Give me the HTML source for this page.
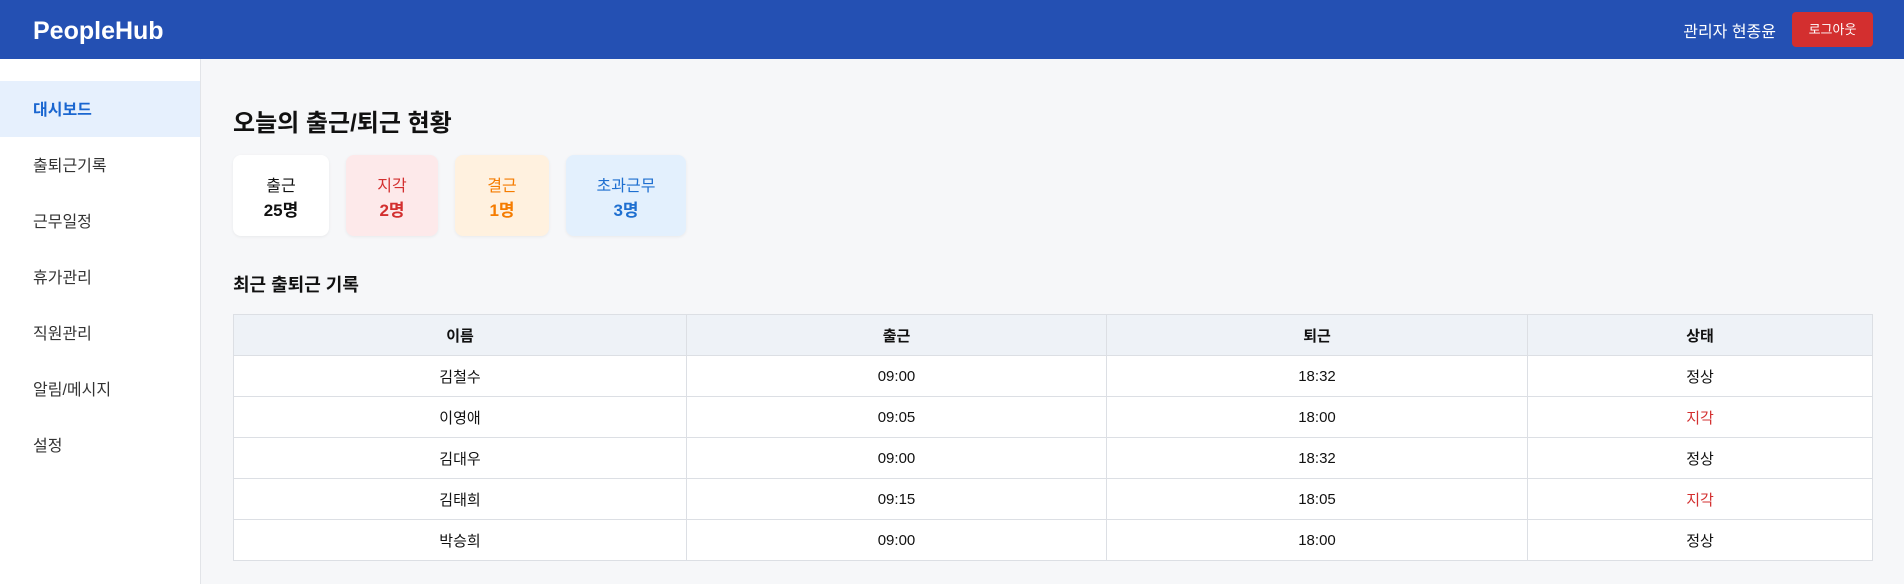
<!DOCTYPE html>
<html><head><meta charset="utf-8"><style>
*{box-sizing:border-box;margin:0;padding:0}
body{width:1904px;height:584px;overflow:hidden;background:#f6f7f9;font-family:"Liberation Sans","Noto Sans CJK KR",sans-serif;color:#111}
.hd{position:absolute;left:0;top:0;width:1904px;height:59px;background:#2450b3;color:#fff}
.logo{position:absolute;left:33px;top:16px;font-size:25px;font-weight:bold;line-height:30px}
.user{position:absolute;right:128px;top:18px;font-size:16px}
.out{position:absolute;left:1792px;top:12px;width:81px;height:35px;background:#d32f2f;border-radius:4px;color:#fff;font-size:13px;text-align:center;line-height:35px}
.sb{position:absolute;left:0;top:59px;width:201px;height:525px;background:#fff;border-right:1px solid #e2e4e8}
.sb div{position:absolute;left:0;width:200px;height:56px;line-height:60px;padding-left:33px;font-size:16px;color:#333}
.sb .act{background:#e6f0fd;color:#1a66d0;font-weight:bold}
h1{position:absolute;left:233px;top:103px;font-size:24px;font-weight:bold}
.card{position:absolute;top:155px;height:81px;border-radius:8px;text-align:center;font-size:16px;padding-top:20px;line-height:24px;box-shadow:0 1px 3px rgba(0,0,0,.06)}
.card b{display:block;font-size:17px}
h2{position:absolute;left:233px;top:271px;font-size:18px;font-weight:bold}
table{position:absolute;left:233px;top:314px;width:1640px;border-collapse:collapse;background:#fff;font-size:15px}
td,th{border:1px solid #dcdfe4;height:41px;text-align:center}
th{background:#eef2f7;font-weight:bold}
.r{color:#d32f2f}
</style></head><body>
<div class="hd"><div class="logo">PeopleHub</div><div class="user">관리자 현종윤</div><div class="out">로그아웃</div></div>
<div class="sb">
<div class="act" style="top:22px">대시보드</div>
<div style="top:78px">출퇴근기록</div>
<div style="top:134px">근무일정</div>
<div style="top:190px">휴가관리</div>
<div style="top:246px">직원관리</div>
<div style="top:302px">알림/메시지</div>
<div style="top:358px">설정</div>
</div>
<h1>오늘의 출근/퇴근 현황</h1>
<div class="card" style="left:233px;width:96px;background:#fff">출근<b>25명</b></div>
<div class="card" style="left:346px;width:92px;background:#fde9ea;color:#d32f2f">지각<b>2명</b></div>
<div class="card" style="left:455px;width:94px;background:#fff1df;color:#f57c00">결근<b>1명</b></div>
<div class="card" style="left:566px;width:120px;background:#e3f0fd;color:#1e6fd0">초과근무<b>3명</b></div>
<h2>최근 출퇴근 기록</h2>
<table>
<tr><th style="width:453px">이름</th><th style="width:420px">출근</th><th style="width:421px">퇴근</th><th>상태</th></tr>
<tr><td>김철수</td><td>09:00</td><td>18:32</td><td>정상</td></tr>
<tr><td>이영애</td><td>09:05</td><td>18:00</td><td class="r">지각</td></tr>
<tr><td>김대우</td><td>09:00</td><td>18:32</td><td>정상</td></tr>
<tr><td>김태희</td><td>09:15</td><td>18:05</td><td class="r">지각</td></tr>
<tr><td>박승희</td><td>09:00</td><td>18:00</td><td>정상</td></tr>
</table>
</body></html>
